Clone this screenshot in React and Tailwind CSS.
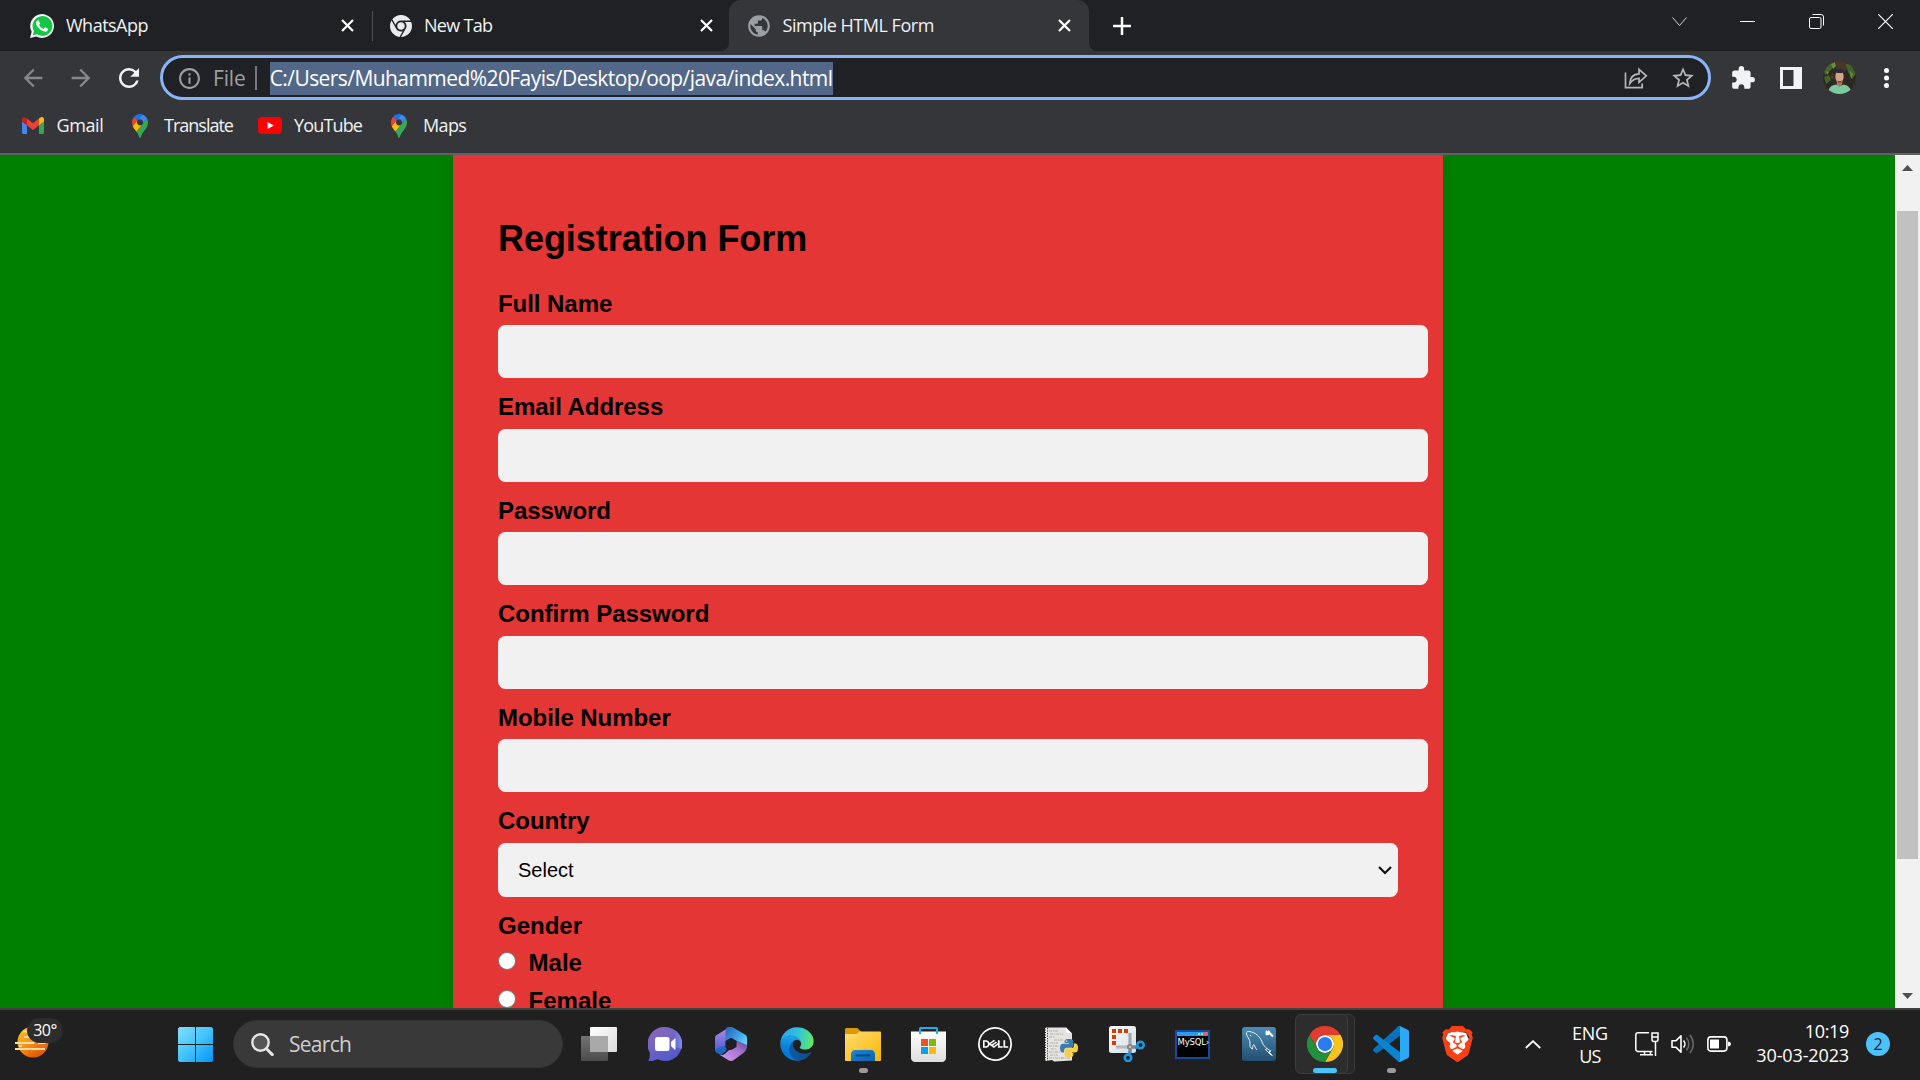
import { FaChrome, FaBrave } from "react-icons/fa6";
import { MdArrowBack, MdArrowForward, MdRefresh, MdExtension, MdPublic, MdStarBorder, MdInfoOutline } from "react-icons/md";
import { SiDell } from "react-icons/si";

const FIELDS = ["Full Name", "Email Address", "Password", "Confirm Password", "Mobile Number"];

function Cross() {
  return (
    <svg className="block size-[13px]" viewBox="0 0 13 13" fill="none" stroke="#fff" strokeWidth="2.2">
      <path d="M1 1l11 11M12 1L1 12" />
    </svg>
  );
}

function WhatsAppIcon() {
  return (
    <svg className="block size-6" viewBox="0 0 24 24">
      <path d="M0 24l1.7-6.2A11.9 11.9 0 1 1 6.3 22.400z" fill="#f4f6f5" />
      <path d="M2.900 21.200l1-4.300A9.900 9.900 0 1 1 7 20.200z" fill="#12c743" />
      <path d="M17.5 14.400c-.3-.15-1.760-.87-2.030-.97-.27-.1-.47-.15-.67.15-.2.300-.77.970-.94 1.160-.17.200-.35.220-.64.070-.3-.15-1.260-.46-2.390-1.470-.88-.79-1.480-1.760-1.650-2.060-.17-.3-.02-.46.13-.6.130-.13.300-.35.440-.52.150-.17.200-.3.300-.5.100-.2.050-.37-.02-.52-.08-.15-.67-1.610-.92-2.210-.24-.58-.49-.5-.67-.51h-.57c-.2 0-.52.070-.79.370-.27.300-1.040 1.020-1.040 2.480s1.060 2.880 1.210 3.070c.150.200 2.100 3.200 5.080 4.490 2.970 1.280 2.970.850 3.500.800.540-.05 1.760-.72 2.010-1.410.25-.69.25-1.290.17-1.410-.07-.13-.27-.2-.57-.35z" fill="#fff" />
    </svg>
  );
}

function GmailIcon() {
  return (
    <svg className="block w-[22px] h-[17px]" viewBox="52 42 88 66" preserveAspectRatio="none">
      <path fill="#4285f4" d="M58 108h14V74L52 59v43c0 3.320 2.690 6 6 6" />
      <path fill="#34a853" d="M120 108h14c3.320 0 6-2.690 6-6V59l-20 15" />
      <path fill="#fbbc04" d="M120 48v26l20-15v-8c0-7.420-8.470-11.650-14.400-7.200" />
      <path fill="#ea4335" d="M72 74V48l24 18 24-18v26L96 92" />
      <path fill="#c5221f" d="M52 51v8l20 15V48l-5.600-4.200c-5.940-4.450-14.400-.22-14.400 7.200" />
    </svg>
  );
}

function PinIcon() {
  return (
    <svg className="block w-4 h-6" viewBox="0 0 92.3 132.3" preserveAspectRatio="none">
      <path fill="#1a73e8" d="M60.2 2.2C55.8.8 51 0 46.1 0 32 0 19.3 6.4 10.8 16.5l21.8 18.3L60.2 2.2z" />
      <path fill="#ea4335" d="M10.8 16.5C4.100 24.5 0 34.9 0 46.1c0 8.700 1.700 15.700 4.600 22l28-33.300-21.800-18.300z" />
      <path fill="#4285f4" d="M46.2 28.5c9.800 0 17.700 7.900 17.700 17.700 0 4.300-1.600 8.300-4.200 11.400 0 0 13.900-16.600 27.500-32.700-5.600-10.800-15.300-19-27-22.700L32.600 34.800c3.300-3.800 8.100-6.300 13.600-6.300" />
      <path fill="#fbbc04" d="M46.2 63.8c-9.800 0-17.700-7.900-17.700-17.700 0-4.300 1.500-8.300 4.100-11.300l-28 33.300c4.800 10.600 12.800 19.200 21 29.900l34.100-40.500c-3.300 3.900-8.100 6.300-13.500 6.300" />
      <path fill="#34a853" d="M59.1 109.2c15.400-24.100 33.300-35 33.300-63 0-7.700-1.900-14.900-5.200-21.300L25.600 98c2.600 3.400 5.300 7.300 7.900 11.300 9.400 14.500 6.800 23.100 12.800 23.100s3.400-8.700 12.800-23.200" />
    </svg>
  );
}

function Avatar() {
  return (
    <svg className="block size-[33px]" viewBox="0 0 33 33">
      <defs><clipPath id="avatar"><circle cx="16.5" cy="16.5" r="16.5" /></clipPath></defs>
      <g clipPath="url(#avatar)">
        <rect width="33" height="33" fill="#2c2a20" />
        <path d="M0 6l6-5 5 3-3 5-6 5zM22 2l6 2 5 9-4 5-4-7zM1 16l5-2 2 5-5 4z" fill="#42642a" />
        <path d="M8 3l4-2 1 4-3 3zM27 10l3 3-2 5zM3 10l3 1-2 3z" fill="#6b8f3f" />
        <path d="M13 0h9l2 8-3 3-8-3zM7 17l3-6 2 8z" fill="#4a3626" />
        <path d="M5 33c0-6 3-8.500 8-9.500l4 1.500 4-1.500c4 1 7 3.500 8 9.500z" fill="#7cc9a0" />
        <path d="M13.500 20h6l-.5 4-2.500 2-2.500-2z" fill="#a9775a" />
        <ellipse cx="16.500" cy="15.500" rx="4.200" ry="6" fill="#d3a388" />
        <path d="M12 13.500c-.5-4 1.500-6 4.700-6s5 2 4.500 6l-1-2c-2 .8-5 .8-7.200 0z" fill="#2a2b3c" />
        <path d="M14.500 19.500c1 1 3 1 4 0l-.5 2h-3z" fill="#5b3a2c" />
      </g>
    </svg>
  );
}

function WeatherIcon() {
  return (
    <svg className="block w-[34px] h-8" viewBox="0 0 34 32">
      <defs><linearGradient id="sun" x1="0" y1="0" x2=".6" y2="1"><stop stopColor="#fdc70c" /><stop offset=".5" stopColor="#f79a1c" /><stop offset="1" stopColor="#e25607" /></linearGradient></defs>
      <circle cx="18" cy="16" r="15.500" fill="url(#sun)" />
      <path d="M8 5.500h8M9 11h6M0 17h19.500M23 17h7.500M0 23h30M4 20h3" stroke="#f7dca6" strokeWidth="2.200" />
    </svg>
  );
}

function WindowsIcon() {
  return (
    <svg className="block size-[35px]" viewBox="0 0 35 35">
      <defs><linearGradient id="win" gradientUnits="userSpaceOnUse" x1="0" y1="0" x2="35" y2="35"><stop stopColor="#84e0ff" /><stop offset=".5" stopColor="#41c3fb" /><stop offset="1" stopColor="#0594ff" /></linearGradient></defs>
      <path d="M1.500 0H17v17H0V1.500zM18 0h15.500L35 1.500V17H18zM0 18h17v17H1.500L0 33.500zM18 18h17v15.500L33.500 35H18z" fill="url(#win)" />
    </svg>
  );
}

function TaskViewIcon() {
  return (
    <svg className="block w-9 h-[34px]" viewBox="0 0 36 34">
      <defs>
        <linearGradient id="tv1" x1="0" y1="0" x2="1" y2="1"><stop stopColor="#fff" /><stop offset="1" stopColor="#dcdcdc" /></linearGradient>
        <linearGradient id="tv2" x1="0" y1="0" x2="0" y2="1"><stop stopColor="#737373" /><stop offset="1" stopColor="#4c4c4c" /></linearGradient>
      </defs>
      <rect x="0" y="9" width="27" height="25" rx="1" fill="url(#tv2)" />
      <rect x="9" y="0" width="27" height="25" rx="1" fill="url(#tv1)" />
      <path d="M9 9h18v16H9z" fill="#a8a8a8" />
    </svg>
  );
}

function ChatIcon() {
  return (
    <svg className="mr-px block size-[34px]" viewBox="0 0 34 34">
      <defs><linearGradient id="chat" x1=".1" y1="0" x2=".7" y2="1"><stop stopColor="#8b64ae" /><stop offset=".35" stopColor="#7b66c4" /><stop offset="1" stopColor="#4f58ca" /></linearGradient><linearGradient id="chat2" x1="0" y1="0" x2="1" y2="0"><stop offset=".5" stopColor="#7f9ff5" stopOpacity="0" /><stop offset="1" stopColor="#7f9ff5" stopOpacity=".8" /></linearGradient></defs>
      <path d="M17 0a17 17 0 1 1-7.500 32.200C7 33.300 4 34.500.300 34c1.200-2.200 1.700-4.500 1.500-8.500A17 17 0 0 1 17 0z" fill="url(#chat)" />
      <path d="M17 0a17 17 0 0 1 16.500 22L20 17z" fill="url(#chat2)" />
      <rect x="7" y="10" width="14.500" height="14" rx="2.500" fill="#fff" />
      <path d="M23 15l3.500-3.300c.5-.4 1 0 1 .5v9.700c0 .6-.5.900-1 .5L23 19z" fill="#fff" />
    </svg>
  );
}

function OfficeIcon() {
  return (
    <svg className="block w-8 h-[34px]" viewBox="0 0 32 34">
      <defs>
        <linearGradient id="o1" x1="0" y1="0" x2="0" y2="1"><stop stopColor="#b98be8" /><stop offset=".6" stopColor="#6b6bdc" /><stop offset="1" stopColor="#2a66c8" /></linearGradient>
        <linearGradient id="o2" x1="0" y1="0" x2="1" y2=".7"><stop stopColor="#2a5fb4" /><stop offset=".6" stopColor="#3f9fe8" /><stop offset="1" stopColor="#5cd8fb" /></linearGradient>
        <linearGradient id="o3" x1="0" y1="1" x2="1" y2="0"><stop stopColor="#d59bf5" /><stop offset=".6" stopColor="#a575cf" /><stop offset="1" stopColor="#5b4287" /></linearGradient>
      </defs>
      <path d="M15 .300C12.500 1 11 4 11 8v3l-.500 13-4.500 4-4.500-2.600C.500 24.800 0 24 0 22.800V11c0-1.300.6-2.400 1.700-3L13 .900z" fill="url(#o1)" />
      <path d="M12 0c1.500-.6 4-.6 6 .5l12 7c1.300.8 2 1.800 2 3.200v9.800L21.500 14 16 11l-5.500 4V7c0-3 .2-5.800 1.500-7z" fill="url(#o2)" />
      <path d="M32 18c0 3-.5 6-3 7.500l-10.500 7.700c-1.600 1-3.500 1-5 0L5 28c6 1 6-4.500 11-5.500 3-.7 5.500-3 5.500-9z" fill="url(#o3)" />
      <path d="M0 22c2 4 6 5.500 9 4l3-3.500-2-4z" fill="#1467be" opacity=".75" />
      <path d="M16 10.800l5.500 3.200v6L16 23l-5.500-3v-6z" fill="#1f1f22" />
    </svg>
  );
}

function EdgeIcon() {
  return (
    <svg className="block size-9" viewBox="0 0 27600 27600">
      <defs>
        <linearGradient id="e1" gradientUnits="userSpaceOnUse" x1="11000" y1="18500" x2="25000" y2="18500"><stop stopColor="#0c59a4" /><stop offset="1" stopColor="#114a8b" /></linearGradient>
        <linearGradient id="e2" gradientUnits="userSpaceOnUse" x1="10000" y1="9500" x2="7000" y2="24000"><stop stopColor="#1b9de2" /><stop offset=".5" stopColor="#0a80d8" /><stop offset="1" stopColor="#0078d4" /></linearGradient>
        <linearGradient id="e3" gradientUnits="userSpaceOnUse" x1="3000" y1="7000" x2="27000" y2="12000"><stop stopColor="#2ba6ea" /><stop offset=".45" stopColor="#2fc3dd" /><stop offset="1" stopColor="#66eb58" /></linearGradient>
      </defs>
      <path fill="url(#e1)" d="M24105 20053a9345 9345 0 01-1053 472 10202 10202 0 01-3590 646c-4732 0-8855-3255-8855-7432 0-1175 680-2193 1643-2729-4280 180-5380 4640-5380 7253 0 7387 6810 8137 8276 8137 791 0 1984-230 2704-456l130-44a12834 12834 0 006660-5282c220-350-168-757-535-565z" />
      <path fill="url(#e2)" d="M11571 25141a7913 7913 0 01-2273-2137 8145 8145 0 01-1514-4740 8093 8093 0 013093-6395 8082 8082 0 011373-859c312-148 846-414 1554-404a3236 3236 0 012569 1297 3184 3184 0 01636 1866c0-21 2446-7960-8005-7960-4390 0-8004 4166-8004 7820 0 2319 538 4170 1212 5604a12833 12833 0 007684 6757 12795 12795 0 003908 610c1414 0 2774-233 4045-656a7575 7575 0 01-6278-803z" />
      <path fill="url(#e3)" d="M16231 15886c-80 105-330 250-330 566 0 260 170 512 472 723 1438 1003 4149 868 4156 868a5954 5954 0 003027-839 6147 6147 0 001133-850 6180 6180 0 001910-4437c26-2242-796-3732-1133-4392-2120-4141-6694-6525-11668-6525-7011 0-12703 5635-12798 12620 47-3654 3679-6605 7996-6605 350 0 2346 34 4200 1007 1634 858 2490 1894 3086 2921 618 1067 728 2415 728 2952s-271 1333-780 1990z" />
    </svg>
  );
}

function FolderIcon() {
  return (
    <svg className="block w-9 h-[33px]" viewBox="0 0 36 33">
      <defs>
        <linearGradient id="f1" x1="0" y1="0" x2="1" y2="1"><stop stopColor="#ffdc72" /><stop offset=".5" stopColor="#fdc93c" /><stop offset="1" stopColor="#f8b500" /></linearGradient>
        <linearGradient id="f2" x1="0" y1="0" x2="1" y2="1"><stop stopColor="#1a88dc" /><stop offset="1" stopColor="#0a62ac" /></linearGradient>
      </defs>
      <path d="M1.500 0h9.500c1 0 2 .5 2.700 1.200L16 3.500 13 8H0V1.500C0 .700.700 0 1.500 0z" fill="#dc9a06" />
      <path d="M0 6h10c1.500 0 2.300-.4 3.200-1.200L14.500 3.500H35c.6 0 1 .4 1 1V32c0 .6-.4 1-1 1H1c-.6 0-1-.4-1-1z" fill="url(#f1)" />
      <path d="M6 33v-7c0-2.200 1.800-4 4-4h16c2.200 0 4 1.800 4 4v7z" fill="url(#f2)" />
      <path d="M11.500 27.500h13" stroke="#0a4680" strokeWidth="1.800" strokeLinecap="round" />
    </svg>
  );
}

function StoreIcon() {
  return (
    <svg className="mr-px block size-[35px]" viewBox="0 0 35 35">
      <defs><linearGradient id="st" x1="0" y1="0" x2="0" y2="1"><stop stopColor="#fff" /><stop offset="1" stopColor="#dedede" /></linearGradient></defs>
      <path d="M0 4.500h35V31c0 2.200-1.800 4-4 4H4c-2.200 0-4-1.800-4-4z" fill="url(#st)" />
      <path d="M9 7V1.700C9 1.200 9.300 1 9.700 1h15.600c.4 0 .7.200.7.700V7" fill="none" stroke="#22aeea" strokeWidth="2" />
      <path d="M10 12h7v7h-7z" fill="#f25022" /><path d="M18 12h7v7h-7z" fill="#7fba00" />
      <path d="M10 20h7v7h-7z" fill="#00a4ef" /><path d="M18 20h7v7h-7z" fill="#ffb900" />
    </svg>
  );
}

function DellIcon() {
  return <SiDell className="block size-[34px]" color="#fff" />;
}

function PythonFileIcon() {
  const snake = "M54.900 0C50.300.020 46 .400 42.100 1.100 30.800 3.100 28.700 7.300 28.700 15v10.200h26.800v3.400H18.600c-7.800 0-14.600 4.700-16.700 13.600-2.500 10.200-2.600 16.600 0 27.300 1.900 7.900 6.400 13.600 14.200 13.600h9.200V70.900c0-8.900 7.700-16.700 16.700-16.700h26.800c7.400 0 13.400-6.100 13.400-13.600V15c0-7.300-6.100-12.700-13.400-13.900C64.300.300 59.500 0 54.900 0zM40.400 8.200c2.800 0 5 2.300 5 5.100s-2.200 5.100-5 5.100-5-2.300-5-5.100 2.300-5.100 5-5.100z";
  return (
    <svg className="ml-px block w-[33px] h-[35px]" viewBox="0 0 33 35">
      <path d="M1 .500h20l6 6v27L9 34.500 7 33l-6 1z" fill="#e4e3e0" />
      <path d="M21 .500l6 6-6-1z" fill="#fff" />
      <path d="M4 4h9M5 7h13M4 10h6M9 13h9M5 16h8M4 19h10M6 22h6M4 25h11M5 28h8M4 31h14M16 31h9" stroke="#b3b1ad" strokeWidth="1" strokeDasharray="3 .8 1.500 .7" />
      <path d="M1 1v33" stroke="#f2f2f2" strokeWidth="2" strokeDasharray="1.500 1" />
      <path d="M2.500 1v33" stroke="#3a3835" strokeWidth="1" strokeDasharray="1.200 1.300" />
      <g transform="translate(15 12) scale(.163)">
        <path d={snake} fill="#3a7cab" />
        <path d={snake} fill="#fdd042" transform="rotate(180 55.300 55.500)" />
      </g>
    </svg>
  );
}

function SnipIcon() {
  return (
    <svg className="block size-9" viewBox="0 0 36 36">
      <defs><linearGradient id="sn" x1="0" y1="0" x2="1" y2="1"><stop stopColor="#fbfdff" /><stop offset="1" stopColor="#d3dbe1" /></linearGradient></defs>
      <rect width="27" height="27" rx="2.500" fill="url(#sn)" />
      <path d="M3 3h4v4H3zM9 3h4v4H9zM15 3h4v4h-4zM3 9h4v4H3zM3 15h4v4H3z" fill="#d83b01" />
      <path d="M21 7v14" stroke="#a3a7ab" strokeWidth="3.200" />
      <path d="M7 21h14" stroke="#b6babd" strokeWidth="3.200" />
      <path d="M21 18v9M18 21h10" stroke="#82878c" strokeWidth="3.400" />
      <circle cx="21" cy="21" r="1" fill="#d8dadc" />
      <g fill="none" stroke="#1c97e0" strokeWidth="2.600"><circle cx="31.500" cy="19" r="3.200" /><circle cx="19" cy="31.800" r="3.200" /><path d="M26 22l3.200-1.200M20.800 26v3.500" /></g>
    </svg>
  );
}

function MySqlIcon() {
  return (
    <div className="mr-[2px] flex h-[29px] w-[35px] flex-col border-2 border-[#1b4a94] bg-black">
      <div className="flex h-[4px] items-center justify-end gap-px bg-[#2a9af0] pr-px">
        <span className="size-[2px] bg-[#a9d4fa]" /><span className="size-[2px] bg-[#a9d4fa]" /><span className="size-[3px] bg-[#e06a5a]" />
      </div>
      <span className="whitespace-nowrap pl-px font-['DejaVu_Sans'] text-[8.500px] leading-[12px] tracking-[-0.2px] text-white">MySQL›</span>
    </div>
  );
}

function WorkbenchIcon() {
  return (
    <svg className="block size-[34px]" viewBox="0 0 34 34">
      <defs><linearGradient id="wb" x1="0" y1="0" x2="0" y2="1"><stop stopColor="#4b8bb4" /><stop offset="1" stopColor="#234f70" /></linearGradient></defs>
      <rect width="34" height="34" rx="3" fill="url(#wb)" />
      <path d="M10.500 22c-2.500-1-3-3.500-2.500-6 .2-1.700-.8-3.200-1.800-5.200C5.500 9.200 4 7.500 4.500 5.500c.7-1.500 3-1.200 5-.5 6 1.500 9 6 11 11 .8 2 2.500 4 4.500 5.500l-1.500 1 6 6M10.500 22c.3-1.500 0-3 1.200-4.500 1.500 1.500 1.500 4 3.500 5.500M25 21.500c1 1 2.500 1.500 4 2.500l-2 .8 3.500 4" fill="none" stroke="#e8f1f7" strokeWidth="1" strokeLinejoin="round" />
      <circle cx="8.500" cy="8.500" r=".7" fill="#fff" />
      <path d="M26.500 5l4.500 4.500" stroke="#fff" strokeWidth="2.200" />
      <path d="M24 3l1.500 1.500 1.500-1.500 1.200 2.500-1.500 2.500-3 .2L23.500 5z" fill="#fff" />
    </svg>
  );
}

function ChromeIcon() {
  return (
    <svg className="block size-9" viewBox="0 0 48 48">
      <circle cx="24" cy="24" r="12" fill="#fff" />
      <path fill="#e33b2e" d="M24 12h20.781a23.994 23.994 0 0 0-41.564.003L13.608 30l.009-.002A11.985 11.985 0 0 1 24 12z" />
      <path fill="#fcc31e" d="M34.391 30.003L24.001 48A23.994 23.994 0 0 0 44.780 12.003H23.999l-.003.009a11.985 11.985 0 0 1 10.395 17.991z" />
      <path fill="#22903f" d="M13.609 30.003L3.218 12.006A23.994 23.994 0 0 0 24.003 48l10.390-17.997-.007-.007a11.985 11.985 0 0 1-20.778.007z" />
      <circle cx="24" cy="24" r="9.500" fill="#2b7cf0" />
    </svg>
  );
}

function VsCodeIcon() {
  return (
    <svg className="block size-9" viewBox="0 0 100 100">
      <path d="M96.500 10.700L75.900.8c-2.400-1.200-5.200-.7-7.100 1.200L1.300 63.600c-1.800 1.600-1.800 4.500 0 6.100l5.500 5c1.500 1.400 3.700 1.500 5.400.3L93.400 13.400c2.700-2.100 6.600-.1 6.600 3.300v-.3c0-2.400-1.400-4.600-3.500-5.700z" fill="#0a70b8" />
      <path d="M96.500 89.300l-20.600 9.900c-2.400 1.200-5.200.7-7.100-1.200L1.300 36.400c-1.800-1.600-1.800-4.500 0-6.100l5.500-5c1.500-1.400 3.700-1.500 5.400-.3L93.400 86.600c2.700 2.100 6.600.1 6.600-3.300v.3c0 2.400-1.400 4.600-3.500 5.700z" fill="#0a84d0" />
      <path d="M75.900 99.100c-2.400 1.200-5.200.7-7.100-1.200 2.300 2.300 6.200.7 6.200-2.600V4.700c0-3.300-3.900-4.900-6.200-2.600 1.900-1.900 4.700-2.300 7.100-1.200l20.600 9.900c2.200 1 3.500 3.200 3.500 5.600v67.200c0 2.400-1.400 4.600-3.500 5.600z" fill="#2ba9f5" />
    </svg>
  );
}

function BraveIcon() {
  return (
    <div className="relative h-9 w-[30px]">
      <svg className="absolute inset-0 block h-9 w-[30px]" viewBox="0 0 30 36"><path d="M6 7l9-2 9 2 3 7-4 12-8 6-8-6-4-12z" fill="#fff" /></svg>
      <FaBrave className="absolute -left-[2.500px] top-0 block h-9 w-[35px]" color="#fb4013" />
    </div>
  );
}

const APPS = [
  { Icon: TaskViewIcon }, { Icon: ChatIcon }, { Icon: OfficeIcon }, { Icon: EdgeIcon },
  { Icon: FolderIcon, open: true }, { Icon: StoreIcon }, { Icon: DellIcon }, { Icon: PythonFileIcon },
  { Icon: SnipIcon }, { Icon: MySqlIcon }, { Icon: WorkbenchIcon }, { Icon: ChromeIcon, active: true },
  { Icon: VsCodeIcon, open: true }, { Icon: BraveIcon },
];

function TabStrip() {
  return (
    <div className="flex h-[51px] shrink-0 items-center bg-[#202124] text-[18px] text-[#f1f3f4]">
      <div className="flex w-[372px] items-center pl-[30px] pr-[18px]">
        <WhatsAppIcon />
        <span className="ml-3 grow tracking-[-0.507px]">WhatsApp</span>
        <Cross />
      </div>
      <div className="h-[30px] w-px bg-[#4d4f53]" />
      <div className="flex w-[356px] items-center pl-[17px] pr-[16px]">
        <FaChrome className="size-[22px]" color="#e8eaed" />
        <span className="ml-3 grow tracking-[-0.700px]">New Tab</span>
        <Cross />
      </div>
      <div className="relative flex h-full w-[360px] items-center rounded-t-[12px] bg-[#35363a] pl-[17px] pr-[18px]">
        <svg className="absolute -left-2 bottom-0 size-2" viewBox="0 0 8 8"><path d="M8 0v8H0a8 8 0 0 0 8-8z" fill="#35363a" /></svg>
        <svg className="absolute -right-2 bottom-0 size-2" viewBox="0 0 8 8"><path d="M0 0v8h8a8 8 0 0 1-8-8z" fill="#35363a" /></svg>
        <MdPublic className="size-[26px]" color="#9aa0a6" />
        <span className="ml-[10.500px] grow tracking-[-0.480px]">Simple HTML Form</span>
        <Cross />
      </div>
      <svg className="ml-6 size-[18px]" viewBox="0 0 18 18" stroke="#fff" strokeWidth="2.500"><path d="M9 0v18M0 9h18" /></svg>
      <div className="-mt-[8px] ml-auto flex items-center pr-[27px]">
        <svg className="h-[9px] w-[15px]" viewBox="0 0 15 9" fill="none" stroke="#d5d6d7"><path d="M.500.500l7 8 7-8" /></svg>
        <div className="ml-[53px] h-px w-[15px] bg-white" />
        <svg className="ml-[54px] size-[15px]" viewBox="0 0 15 15" fill="none" stroke="#fff"><rect x=".500" y="3.500" width="11.500" height="11" rx="1.500" /><path d="M3.500.500h8.500a2.500 2.500 0 0 1 2.500 2.500v8.500" /></svg>
        <svg className="ml-[54px] size-[15px]" viewBox="0 0 15 15" stroke="#fff" strokeWidth="1.200"><path d="M0 0l15 15M15 0L0 15" /></svg>
      </div>
    </div>
  );
}

function Toolbar() {
  return (
    <div className="flex h-[53px] shrink-0 items-center bg-[#35363a] pl-[19px]">
      <MdArrowBack className="size-7" color="#85878a" />
      <MdArrowForward className="ml-5 size-7" color="#85878a" />
      <MdRefresh className="ml-[19px] size-[30px]" color="#f1f3f4" />
      <div className="ml-[16px] flex h-[45px] w-[1551px] items-center rounded-full border-[3px] border-[#8ab4f8] bg-[#202124] pl-[14px] pr-[12px] text-[21px] leading-[33px]">
        <MdInfoOutline className="mt-px size-[25px]" color="#9aa0a6" />
        <span className="ml-[11px] mt-[2px] tracking-[-0.147px] text-[#9aa0a6]">File</span>
        <div className="ml-[9px] h-6 w-[2px] bg-[#75797d]" />
        <span className="ml-[13px] mt-[2px] w-[563px] whitespace-nowrap bg-[#536788] tracking-[-0.569px] text-white">C:/Users/Muhammed%20Fayis/Desktop/oop/java/index.html</span>
        <svg className="ml-auto h-[22px] w-6" viewBox="0 0 24 22" fill="none" stroke="#b4b6b9" strokeWidth="1.700">
          <path d="M1.500 5.500v15.200h16.700v-4.200" />
          <path d="M5.800 16.500c.3-6 3.500-9.300 9.200-9.600V2.300l7.300 6.500-7.300 6.500v-4c-4 .1-6.800 1.500-9.200 5.200z" />
        </svg>
        <MdStarBorder className="ml-[22px] size-[26px]" color="#b4b6b9" />
      </div>
      <MdExtension className="ml-[19px] size-[26px]" color="#f1f3f4" />
      <svg className="ml-[24px] h-[22px] w-[22px]" viewBox="0 0 22 22"><path d="M0 0h22v22H0z" fill="#f1f3f4" /><path d="M3 3h10.500v16H3z" fill="#35363a" /></svg>
      <div className="ml-[21px]"><Avatar /></div>
      <svg className="ml-[28px] h-5 w-[5px]" viewBox="0 0 5 20" fill="#fff"><circle cx="2.500" cy="2.500" r="2.500" /><circle cx="2.500" cy="10" r="2.500" /><circle cx="2.500" cy="17.500" r="2.500" /></svg>
    </div>
  );
}

function Bookmarks() {
  return (
    <div className="flex h-[49px] shrink-0 items-center bg-[#35363a] pb-[6px] pl-[22px] text-[18px] text-[#f1f3f4]">
      <GmailIcon />
      <span className="ml-[12.500px] w-[45.500px] tracking-[-0.400px]">Gmail</span>
      <div className="ml-[30px]"><PinIcon /></div>
      <span className="ml-4 w-[71px] tracking-[-1px]">Translate</span>
      <svg className="ml-[23px] h-[17px] w-6" viewBox="0 0 24 17"><rect width="24" height="17" rx="4" fill="#f00" /><path d="M9.600 4.900v7.200l6.200-3.600z" fill="#fff" /></svg>
      <span className="ml-[12px] w-[69px] tracking-[-0.850px]">YouTube</span>
      <div className="ml-[28px]"><PinIcon /></div>
      <span className="ml-[16px] tracking-[-0.650px]">Maps</span>
    </div>
  );
}

function Page() {
  return (
    <div className="flex h-[853px] shrink-0 overflow-hidden bg-[#008000] font-['Liberation_Sans',Arial,sans-serif] text-black">
      <form className="ml-[453px] h-[900px] w-[990px] shrink-0 bg-[#e43635] px-[45px] pt-[63px] shadow-[0_0_15px_rgba(0,0,0,0.12)]">
        <h2 className="text-[36px] font-bold leading-[42px] tracking-[-0.050px]">Registration Form</h2>
        <div className="mt-[29.800px] flex flex-col">
          {FIELDS.map((label) => (
            <div key={label} className="h-[103.500px]">
              <label className="block text-[24px] font-bold leading-[27px] tracking-[-0.050px]">{label}</label>
              <div className="mt-[8.400px] h-[53px] w-[930px] rounded-[7.500px] bg-[#f1f1f1]" />
            </div>
          ))}
          <span className="block text-[24px] font-bold leading-[28px] tracking-[-0.050px]">Country</span>
          <div className="mt-[7.700px] flex h-[54px] w-[900px] items-center justify-between rounded-[7.500px] bg-[#f1f1f1] pl-[20px] pr-[6px] text-[20px]">
            <span>Select</span>
            <svg className="mt-[2px] h-[9px] w-[14px]" viewBox="0 0 14 9" fill="none" stroke="#111" strokeWidth="2.200"><path d="M1 1l6 6 6-6" /></svg>
          </div>
          <span className="mt-[15px] block text-[24px] font-bold leading-[27px]">Gender</span>
          {["Male", "Female"].map((g) => (
            <div key={g} className="mt-[10px] flex h-[27.500px] items-center text-[24px] font-bold leading-[27px]">
              <span className="-mt-[3px] size-[18px] rounded-full border-[1.500px] border-[#767676] bg-white" />
              <span className="ml-[12.600px]">{g}</span>
            </div>
          ))}
        </div>
      </form>
      <div className="ml-auto flex w-[25px] shrink-0 flex-col items-center bg-[#f1f1f1] pt-[10px]">
        <svg className="h-[6px] w-[11px]" viewBox="0 0 11 6"><path d="M0 6L5.500 0 11 6z" fill="#505050" /></svg>
        <div className="mr-px mt-[40px] h-[648px] w-[21px] bg-[#c1c1c1]" />
        <svg className="mt-[134px] h-[6px] w-[11px]" viewBox="0 0 11 6"><path d="M0 0l5.500 6L11 0z" fill="#505050" /></svg>
      </div>
    </div>
  );
}

function Taskbar() {
  return (
    <div className="flex h-[72px] shrink-0 items-center border-t-2 border-[#414141] bg-[#212020] pb-[2px] text-[18px] text-white">
      <div className="relative w-[178px] shrink-0 pl-[15px]">
        <div className="-mt-[5px]"><WeatherIcon /></div>
        <span className="absolute left-[27px] -top-[13px] flex h-[25px] w-[36px] items-center justify-center rounded-full bg-[#2d2d2d] text-[16px] leading-none tracking-[-0.500px]">30°</span>
      </div>
      <WindowsIcon />
      <div className="ml-[20px] flex h-12 w-[330px] items-center rounded-full border border-[#333] bg-[#3a3939] pl-[17px] text-[21px] text-[#cfcfcf]">
        <svg className="size-[23px]" viewBox="0 0 23 23" fill="none" stroke="#e6e6e6" strokeWidth="2.400" strokeLinecap="round"><circle cx="9.500" cy="9.500" r="8.200" fill="#555" /><path d="M15.500 15.800l5.800 5.800" strokeWidth="3" /></svg>
        <span className="ml-[15px] mt-[2px] tracking-[-0.724px]">Search</span>
      </div>
      <div className="ml-[3px] flex">
        {APPS.map(({ Icon, open, active }, i) => (
          <div key={i} className="relative flex h-[60px] w-[66px] items-center justify-center">
            {active && <div className="absolute left-[10px] top-0 h-[60px] w-[53px] rounded-[6px] border border-[#3a3a3a] bg-[#282828]" />}
            {active && <div className="absolute left-[3px] top-0 h-[60px] w-[53px] rounded-[6px] border border-[#3d3d3d] bg-[#2d2d2d]" />}
            <div className="relative"><Icon /></div>
            {open && <div className="absolute bottom-px left-[28.500px] h-[5px] w-[9px] rounded-full bg-[#9a9a9a]" />}
            {active && <div className="absolute bottom-px left-[21px] h-[5px] w-6 rounded-full bg-[#4cc2ff]" />}
          </div>
        ))}
      </div>
      <svg className="ml-[35px] h-[9px] w-4" viewBox="0 0 16 9" fill="none" stroke="#fff" strokeWidth="1.800"><path d="M.800 8L8 1.200 15.200 8" /></svg>
      <div className="ml-[31px] mt-px flex w-[36px] flex-col items-center leading-[23px]">
        <span className="tracking-[-0.277px]">ENG</span>
        <span className="tracking-[-0.800px]">US</span>
      </div>
      <svg className="ml-[27px] size-6 shrink-0" viewBox="0 0 24 24" fill="none" stroke="#fff" strokeWidth="1.500">
        <path d="M14 .800H3A2.200 2.200 0 0 0 .800 3v14.200A2.200 2.200 0 0 0 3 19.400h14.500M9.500 19.500v3M15.500 19.500v3M5 22.800h13M17 1h6v6.500a2 2 0 0 1-2 2h-2a2 2 0 0 1-2-2zM17 5h6M20.500 9.500V24" />
      </svg>
      <svg className="ml-[12px] h-5 w-6 shrink-0" viewBox="0 0 24 20" fill="none" stroke="#fff" strokeWidth="1.600">
        <path d="M1 6.800h3.800L10 1.800v16.400l-5.200-5H1zM12.500 6.500c1.800 2 1.800 5 0 7" strokeLinejoin="round" />
        <path d="M15.500 3.800c3.200 3.600 3.200 8.800 0 12.400M18.800 1c4.500 5.200 4.500 12.800 0 18" stroke="#666" />
      </svg>
      <svg className="ml-[12px] h-4 w-6 shrink-0" viewBox="0 0 24 16"><rect x=".900" y=".900" width="19" height="14.200" rx="3" fill="none" stroke="#fff" strokeWidth="1.600" /><path d="M3 3.500h9v9H3zM21 5.500c1.500 0 3 1 3 2.500s-1.500 2.500-3 2.500z" fill="#fff" /></svg>
      <div className="ml-[25px] -mt-[2px] flex w-[93px] flex-col items-end whitespace-nowrap leading-6">
        <span className="tracking-[-0.350px]">10:19</span>
        <span className="tracking-[-0.125px]">30-03-2023</span>
      </div>
      <div className="ml-[17px] flex size-6 items-center justify-center rounded-full bg-[#4cc2ff] text-[16px] leading-none text-[#10242e]">2</div>
    </div>
  );
}

export default function App() {
  return (
    <div className="flex h-[1080px] w-[1920px] flex-col overflow-hidden bg-[#35363a] font-['Open_Sans','Noto_Sans',sans-serif]">
      <TabStrip />
      <Toolbar />
      <Bookmarks />
      <div className="h-[2px] shrink-0 bg-[#5f6064]" />
      <Page />
      <Taskbar />
    </div>
  );
}
